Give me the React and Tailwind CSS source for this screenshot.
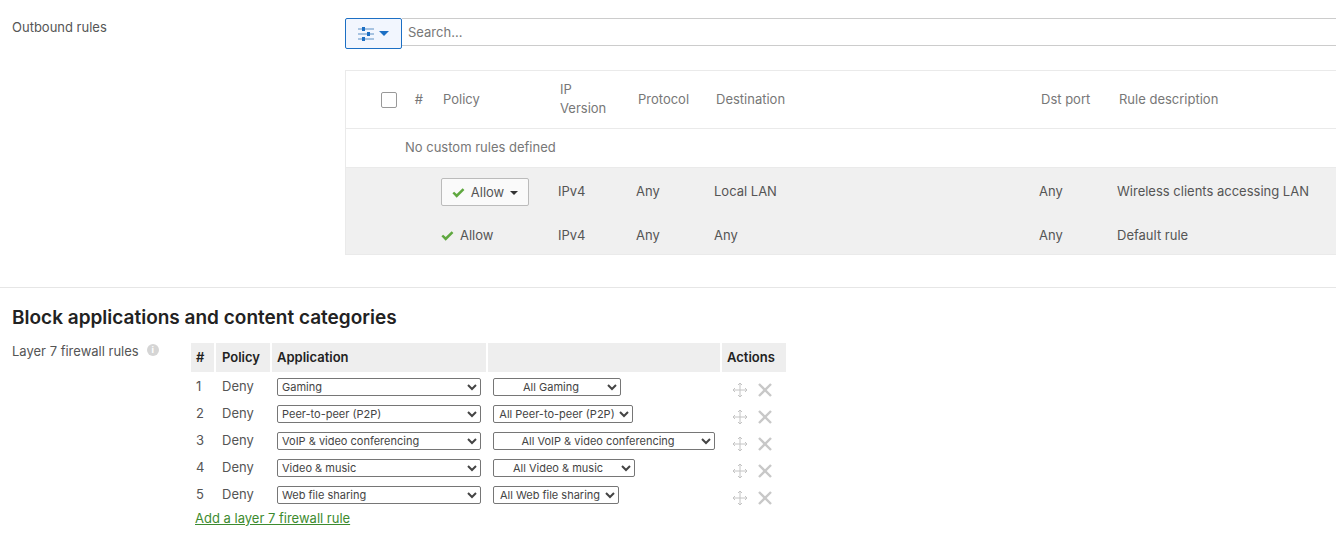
import React from 'react';

const outboundCols = 'grid grid-cols-[96px_117px_78px_78px_325px_78px_1fr] items-center';
const layer7Cols = 'grid grid-cols-[23px_54px_214px_232px_64px] gap-x-[2px]';

const layer7Rules = [
  { id: 1, app: 'Gaming', sub: 'All Gaming', subWidth: 'w-[128px]' },
  { id: 2, app: 'Peer-to-peer (P2P)', sub: 'All Peer-to-peer (P2P)', subWidth: 'w-[140px]' },
  { id: 3, app: 'VoIP & video conferencing', sub: 'All VoIP & video conferencing', subWidth: 'w-[222px]' },
  { id: 4, app: 'Video & music', sub: 'All Video & music', subWidth: 'w-[142px]' },
  { id: 5, app: 'Web file sharing', sub: 'All Web file sharing', subWidth: 'w-[126px]' },
];

const Check = ({ className }) => (
  <svg viewBox="0 0 14 11" className={className} fill="#5fa83f">
    <path d="M0.3 5.9 L2.2 4 L5 6.7 L11.6 0.3 L13.5 2.2 L5 10.6 Z" />
  </svg>
);

const Sliders = () => (
  <svg viewBox="0 0 16 14" className="w-4 h-[14px]" fill="#1c6fc4">
    <rect x="0" y="1.5" width="16" height="1" fill="#5c8fc4" />
    <rect x="4" y="0" width="3" height="4" />
    <rect x="0" y="6.5" width="16" height="1" fill="#5c8fc4" />
    <rect x="9" y="5" width="3" height="4" />
    <rect x="0" y="11.5" width="16" height="1" fill="#5c8fc4" />
    <rect x="4" y="10" width="3" height="4" />
  </svg>
);

const MoveIcon = () => (
  <svg viewBox="0 0 16 16" className="w-4 h-4" fill="none" stroke="#c4c4c4" strokeWidth="1">
    <path d="M8 1v14M1 8h14" />
    <path d="M6 3l2-2 2 2M6 13l2 2 2-2M3 6L1 8l2 2M13 6l2 2-2 2" />
  </svg>
);

const CloseIcon = () => (
  <svg viewBox="0 0 14 14" className="w-[14px] h-[14px]" stroke="#c8c8c8" strokeWidth="2.4">
    <path d="M1 1l12 12M13 1L1 13" />
  </svg>
);

const RuleSelect = ({ value, className }) => (
  <select
    defaultValue={value}
    className={`h-[18px] bg-white border border-[#767676] rounded-[2px] text-[11px] text-[#444] appearance-auto ${className}`}
  >
    <option>{value}</option>
  </select>
);

export default function App() {
  return (
    <div className="w-[1336px] h-[536px] overflow-hidden bg-white text-[13px] text-[#555] font-['Inter','Noto_Sans',sans-serif]">
      <div className="flex pt-[18px] h-[287px]">
        <div className="w-[345px] pl-3 pt-[1px] leading-[16px]">Outbound rules</div>
        <div className="flex-1 min-w-0">
          <div className="flex items-start">
            <button className="w-[57px] h-[31px] flex items-center justify-center gap-[5px] bg-[#f2f6fe] border border-[#1c6fc4] rounded-[2px]">
              <Sliders />
              <span className="w-0 h-0 border-x-[5px] border-x-transparent border-t-[5px] border-t-[#1c6fc4]" />
            </button>
            <div className="flex-1 h-[28px] flex items-center pl-[6px] pt-[1px] border-y border-[#ccc] text-[#777]">Search...</div>
          </div>

          <div className="mt-[21px] border border-[#eaeaea] border-r-0 text-[#777]">
            <div className={`${outboundCols} h-[58px] border-b border-[#eaeaea]`}>
              <div className="flex items-center justify-between pl-[35px] pr-[19px]">
                <span className="w-4 h-4 border border-[#999] rounded-[2px] bg-white" />
                <span>#</span>
              </div>
              <div className="pl-[1px]">Policy</div>
              <div className="leading-[19px] pl-[1px] -mt-[2px]">IP<br />Version</div>
              <div className="pl-[1px]">Protocol</div>
              <div className="pl-[1px]">Destination</div>
              <div className="pl-[1px]">Dst port</div>
              <div className="pl-[1px]">Rule description</div>
            </div>
            <div className="h-[39px] flex items-center pl-[59px] border-b border-[#eaeaea]">No custom rules defined</div>
            <div className="bg-[#f0f0f0] text-[#555]">
              <div className={`${outboundCols} h-[48px]`}>
                <div />
                <div className="-ml-[1px]">
                  <button className="w-[88px] h-[28px] flex items-center justify-center gap-[6px] pt-[1px] bg-[#fafafa] border border-[#bbb] rounded-[2px] text-[#555]">
                    <Check className="w-[13px] h-[10px]" />
                    <span>Allow</span>
                    <span className="w-0 h-0 border-x-[4px] border-x-transparent border-t-[4px] border-t-[#333]" />
                  </button>
                </div>
                <div className="-ml-[1px]">IPv4</div>
                <div className="-ml-[1px]">Any</div>
                <div className="-ml-[1px]">Local LAN</div>
                <div className="-ml-[1px]">Any</div>
                <div className="-ml-[1px]">Wireless clients accessing LAN</div>
              </div>
              <div className={`${outboundCols} h-[38px] pt-[2px]`}>
                <div />
                <div className="-ml-[1px] flex items-center gap-[6px]">
                  <Check className="w-[13px] h-[10px]" />
                  <span>Allow</span>
                </div>
                <div className="-ml-[1px]">IPv4</div>
                <div className="-ml-[1px]">Any</div>
                <div className="-ml-[1px]">Any</div>
                <div className="-ml-[1px]">Any</div>
                <div className="-ml-[1px]">Default rule</div>
              </div>
            </div>
          </div>
        </div>
      </div>

      <div className="border-t border-[#e6e6e6] px-3 pt-[17px]">
        <h2 className="text-[19px] leading-[26px] font-semibold text-[#222]">Block applications and content categories</h2>
        <div className="flex mt-[12px]">
          <div className="w-[179px] flex items-start gap-2">
            <span className="leading-[16px]">Layer 7 firewall rules</span>
            <span className="mt-[1px] w-3 h-3 rounded-full bg-[#d5d5d5] text-white text-[9px] leading-3 text-center font-bold">i</span>
          </div>
          <div>
            <div className={`${layer7Cols} h-[29px] mb-[1px] font-semibold text-[#222]`}>
              <div className="bg-[#eee] flex items-center pl-[5px]">#</div>
              <div className="bg-[#eee] flex items-center pl-[6px]">Policy</div>
              <div className="bg-[#eee] flex items-center pl-[5px]">Application</div>
              <div className="bg-[#eee]" />
              <div className="bg-[#eee] flex items-center pl-[5px]">Actions</div>
            </div>
            {layer7Rules.map((rule) => (
              <div key={rule.id} className={`${layer7Cols} h-[27px] items-center`}>
                <div className="pl-[5px]">{rule.id}</div>
                <div className="pl-[6px]">Deny</div>
                <div className="pl-[5px]">
                  <RuleSelect value={rule.app} className="w-[204px]" />
                </div>
                <div className="pl-[5px]">
                  <RuleSelect value={rule.sub} className={`${rule.subWidth} [text-align-last:center]`} />
                </div>
                <div className="flex items-center gap-[10px] pl-[10px] pt-[6px]">
                  <MoveIcon />
                  <CloseIcon />
                </div>
              </div>
            ))}
            <a href="#" className="block ml-[4px] mt-[1px] leading-[18px] text-[#3d8b2f] underline">Add a layer 7 firewall rule</a>
          </div>
        </div>
      </div>
    </div>
  );
}
